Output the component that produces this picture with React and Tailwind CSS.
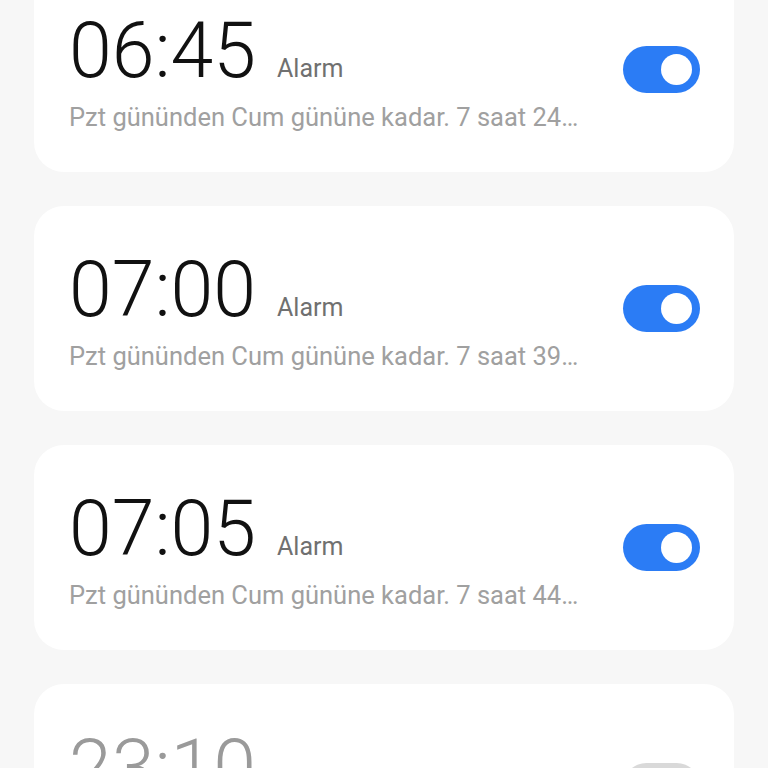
import React from 'react'

const alarms = [
  { time: '06:45', info: 'Pzt gününden Cum gününe kadar. 7 saat 24…', on: true },
  { time: '07:00', info: 'Pzt gününden Cum gününe kadar. 7 saat 39…', on: true },
  { time: '07:05', info: 'Pzt gününden Cum gününe kadar. 7 saat 44…', on: true },
  { time: '23:10', info: 'Pzt gününden Cum gününe kadar', on: false },
]

function Toggle({ on }) {
  return (
    <div
      className={`w-[77px] h-[47px] rounded-full flex items-center px-[8px] ${
        on ? 'bg-[#2b7cf5] justify-end' : 'bg-[#d9d9d9] justify-start'
      }`}
    >
      <div className="w-[31px] h-[31px] rounded-full bg-white" />
    </div>
  )
}

function AlarmCard({ time, info, on }) {
  return (
    <div className="h-[205px] shrink-0 rounded-[30px] bg-white flex items-center justify-between pl-[35px] pr-[34px]">
      <div className="self-start pt-[46px]">
        <div className="flex items-baseline gap-[21px]">
          <span className={`text-[77px] font-light leading-none ${on ? 'text-[#111]' : 'text-[#9a9a9a]'}`}>{time}</span>
          <span className="text-[25px] leading-none text-[#707070]">Alarm</span>
        </div>
        <div className="mt-[15px] whitespace-nowrap text-[25.5px] leading-none text-[#a0a0a0]">{info}</div>
      </div>
      <Toggle on={on} />
    </div>
  )
}

export default function App() {
  return (
    <div
      className="h-[768px] w-[768px] overflow-hidden bg-[#f7f7f7]"
      style={{ fontFamily: 'Roboto, "Noto Sans", sans-serif' }}
    >
      <div className="-mt-[33px] px-[34px] flex flex-col gap-[34px]">
        {alarms.map((a) => (
          <AlarmCard key={a.time} {...a} />
        ))}
      </div>
    </div>
  )
}
